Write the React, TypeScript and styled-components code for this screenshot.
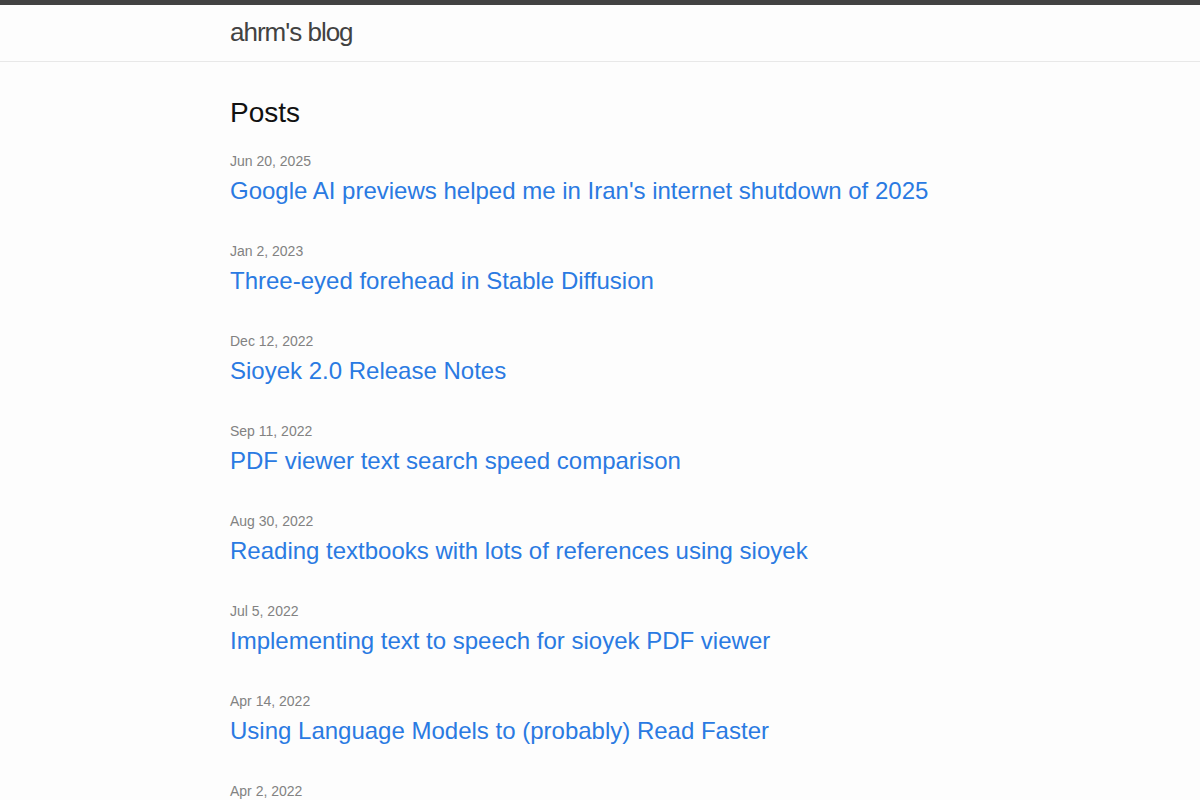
import React from 'react';
import styled, {createGlobalStyle} from 'styled-components';

interface Post {
  date: string;
  title: string;
}

const posts: Post[] = [
  {date: 'Jun 20, 2025', title: "Google AI previews helped me in Iran's internet shutdown of 2025"},
  {date: 'Jan 2, 2023', title: 'Three-eyed forehead in Stable Diffusion'},
  {date: 'Dec 12, 2022', title: 'Sioyek 2.0 Release Notes'},
  {date: 'Sep 11, 2022', title: 'PDF viewer text search speed comparison'},
  {date: 'Aug 30, 2022', title: 'Reading textbooks with lots of references using sioyek'},
  {date: 'Jul 5, 2022', title: 'Implementing text to speech for sioyek PDF viewer'},
  {date: 'Apr 14, 2022', title: 'Using Language Models to (probably) Read Faster'},
  {date: 'Apr 2, 2022', title: 'Sioyek 1.2 Release Notes'}
];

export default function App() {
  return (
    <>
      <GlobalStyle />
      <SiteHeader>
        <Wrapper>
          <SiteTitle href="#">ahrm's blog</SiteTitle>
        </Wrapper>
      </SiteHeader>
      <PageContent>
        <Wrapper>
          <ListHeading>Posts</ListHeading>
          <PostList>
            {posts.map((post) => (
              <PostItem key={post.title}>
                <PostMeta>{post.date}</PostMeta>
                <PostTitle>
                  <PostLink href="#">{post.title}</PostLink>
                </PostTitle>
              </PostItem>
            ))}
          </PostList>
        </Wrapper>
      </PageContent>
    </>
  );
}

const GlobalStyle = createGlobalStyle`
  html, body {
    margin: 0;
    padding: 0;
  }
  body {
    background: #fdfdfd;
    color: #111111;
    font-family: "Liberation Sans", Arial, Helvetica, sans-serif;
    font-size: 16px;
    line-height: 1.5;
    font-weight: 400;
  }
`;

const SiteHeader = styled.header`
  border-top: 5px solid #424242;
  border-bottom: 1px solid #e8e8e8;
  min-height: 56px;
`;

const Wrapper = styled.div`
  max-width: 740px;
  margin: 0 auto;
  padding: 0 30px;
`;

const SiteTitle = styled.a`
  display: inline-block;
  font-size: 26px;
  font-weight: 300;
  line-height: 54px;
  letter-spacing: -1px;
  color: #424242;
  text-decoration: none;
`;

const PageContent = styled.main`
  padding: 30px 0;
`;

const ListHeading = styled.h2`
  margin: 0 0 15px;
  font-size: 28px;
  font-weight: 400;
  line-height: 42px;
  color: #111111;
`;

const PostList = styled.ul`
  list-style: none;
  margin: 0;
  padding: 0;
  display: flex;
  flex-direction: column;
  gap: 30px;
`;

const PostItem = styled.li`
  display: flex;
  flex-direction: column;
`;

const PostMeta = styled.span`
  font-size: 14px;
  line-height: 24px;
  color: #828282;
`;

const PostTitle = styled.h3`
  margin: 0;
  font-size: 24px;
  font-weight: 400;
  line-height: 36px;
`;

const PostLink = styled.a`
  display: block;
  color: #2a7ae2;
  text-decoration: none;
`;
